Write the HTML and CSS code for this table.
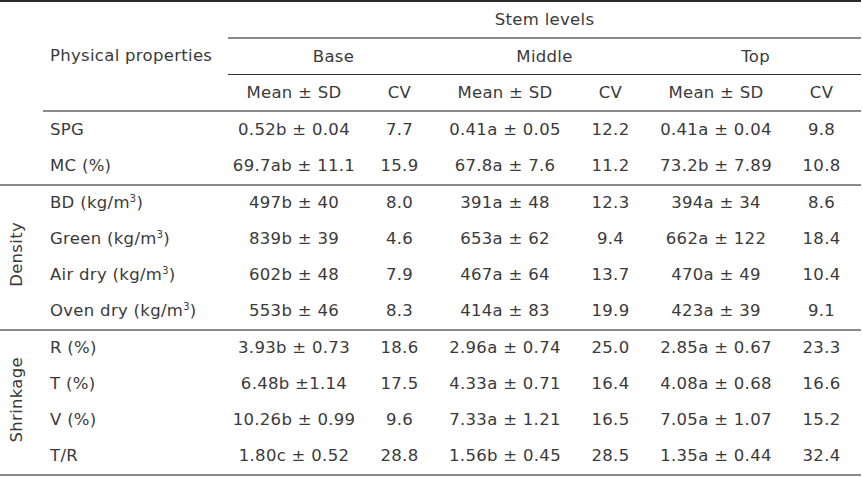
FILE: index.html
```html
<!DOCTYPE html>
<html>
<head>
<meta charset="utf-8">
<link rel="stylesheet" href="styles.css">
</head>
<body>
<table class="data">
  <colgroup>
    <col class="c-group"><col class="c-label">
    <col class="c-mean"><col class="c-cv">
    <col class="c-mean"><col class="c-cv">
    <col class="c-mean"><col class="c-cv">
  </colgroup>
  <thead>
    <tr class="top">
      <th rowspan="3" class="blank"></th>
      <th rowspan="3" class="label head-label">Physical properties</th>
      <th colspan="6" class="span-line">Stem levels</th>
    </tr>
    <tr>
      <th colspan="2" class="dark-line">Base</th>
      <th colspan="2" class="dark-line">Middle</th>
      <th colspan="2" class="dark-line">Top</th>
    </tr>
    <tr>
      <th class="num">Mean ± SD</th><th class="num">CV</th>
      <th class="num">Mean ± SD</th><th class="num">CV</th>
      <th class="num">Mean ± SD</th><th class="num">CV</th>
    </tr>
  </thead>
  <tbody>
    <tr>
      <td rowspan="2" class="group"></td>
      <td class="label">SPG</td>
      <td>0.52b ± 0.04</td><td>7.7</td>
      <td>0.41a ± 0.05</td><td>12.2</td>
      <td>0.41a ± 0.04</td><td>9.8</td>
    </tr>
    <tr class="last">
      <td class="label">MC (%)</td>
      <td>69.7ab ± 11.1</td><td>15.9</td>
      <td>67.8a ± 7.6</td><td>11.2</td>
      <td>73.2b ± 7.89</td><td>10.8</td>
    </tr>
  </tbody>
  <tbody>
    <tr>
      <td rowspan="4" class="group"><span class="vert">Density</span></td>
      <td class="label">BD (kg/m<sup>3</sup>)</td>
      <td>497b ± 40</td><td>8.0</td>
      <td>391a ± 48</td><td>12.3</td>
      <td>394a ± 34</td><td>8.6</td>
    </tr>
    <tr>
      <td class="label">Green (kg/m<sup>3</sup>)</td>
      <td>839b ± 39</td><td>4.6</td>
      <td>653a ± 62</td><td>9.4</td>
      <td>662a ± 122</td><td>18.4</td>
    </tr>
    <tr>
      <td class="label">Air dry (kg/m<sup>3</sup>)</td>
      <td>602b ± 48</td><td>7.9</td>
      <td>467a ± 64</td><td>13.7</td>
      <td>470a ± 49</td><td>10.4</td>
    </tr>
    <tr class="last">
      <td class="label">Oven dry (kg/m<sup>3</sup>)</td>
      <td>553b ± 46</td><td>8.3</td>
      <td>414a ± 83</td><td>19.9</td>
      <td>423a ± 39</td><td>9.1</td>
    </tr>
  </tbody>
  <tbody>
    <tr>
      <td rowspan="4" class="group"><span class="vert">Shrinkage</span></td>
      <td class="label">R (%)</td>
      <td>3.93b ± 0.73</td><td>18.6</td>
      <td>2.96a ± 0.74</td><td>25.0</td>
      <td>2.85a ± 0.67</td><td>23.3</td>
    </tr>
    <tr>
      <td class="label">T (%)</td>
      <td>6.48b ±1.14</td><td>17.5</td>
      <td>4.33a ± 0.71</td><td>16.4</td>
      <td>4.08a ± 0.68</td><td>16.6</td>
    </tr>
    <tr>
      <td class="label">V (%)</td>
      <td>10.26b ± 0.99</td><td>9.6</td>
      <td>7.33a ± 1.21</td><td>16.5</td>
      <td>7.05a ± 1.07</td><td>15.2</td>
    </tr>
    <tr class="last">
      <td class="label">T/R</td>
      <td>1.80c ± 0.52</td><td>28.8</td>
      <td>1.56b ± 0.45</td><td>28.5</td>
      <td>1.35a ± 0.44</td><td>32.4</td>
    </tr>
  </tbody>
</table>
</body>
</html>
```

FILE: styles.css
```css
html, body {
  margin: 0;
  padding: 0;
  background: #fff;
}

body {
  font-family: "DejaVu Sans", "Noto Sans", sans-serif;
  font-size: 16.5px;
  letter-spacing: 0.3px;
  color: #3a3a3a;
}

.data {
  border-collapse: collapse;
  table-layout: fixed;
  width: 860px;
  margin-top: 0;
}

.c-group { width: 43px; }
.c-label { width: 185px; }
.c-mean { width: 132px; }
.c-cv { width: 79px; }

.data th,
.data td {
  height: 35.75px;
  padding: 0;
  line-height: 20px;
  font-weight: normal;
  text-align: center;
  vertical-align: middle;
  white-space: nowrap;
}

.data th {
  height: 35px;
}

.data thead tr.top th {
  border-top: 2px solid #2a2a2a;
}

.data th.span-line {
  border-bottom: 2px solid #8a8a8a;
}

.data th.dark-line {
  border-bottom: 1.5px solid #333;
}

.data th.head-label {
  border-bottom: 2px solid #8a8a8a;
}

.data th.num {
  border-bottom: 2px solid #8a8a8a;
}

.data .label {
  text-align: left;
  padding-left: 7px;
}

.data tbody tr.last td,
.data tbody td.group {
  border-bottom: 2px solid #8a8a8a;
}

.data td.group {
  padding-right: 10px;
}

.vert {
  writing-mode: vertical-rl;
  transform: rotate(180deg);
  display: inline-block;
}

sup {
  font-size: 0.6em;
  line-height: 0;
  vertical-align: 0.6em;
}
```
